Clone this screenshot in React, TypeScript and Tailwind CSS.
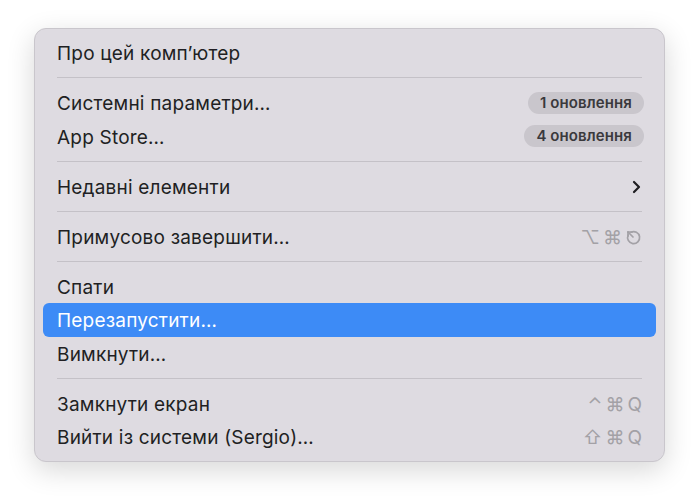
import { ReactNode } from 'react';

const font = { fontFamily: 'Inter, "Noto Sans", sans-serif' };

function Row({ label, right, active }: { label: string; right?: ReactNode; active?: boolean }) {
  return (
    <div
      className={`h-[33.5px] flex items-center justify-between px-[14px] rounded-[6px] ${
        active ? 'bg-[#3d8bf6] text-white' : 'text-[#211f23]'
      }`}
    >
      <span className="text-[19px] leading-none tracking-[0.2px] mt-[2px]">{label}</span>
      {right}
    </div>
  );
}

function Sep() {
  return (
    <div className="h-[16.5px] flex items-center px-[14px]">
      <div className="h-px w-full bg-[#c4c1c7]" />
    </div>
  );
}

function Badge({ text }: { text: string }) {
  return (
    <span className="h-[22px] px-[12px] -mr-[2px] rounded-full bg-[#c9c6cc] text-[15px] font-semibold tracking-[0.1px] text-[#3a393c] flex items-center">
      {text}
    </span>
  );
}

function Keys({ children }: { children: ReactNode }) {
  return <span className="flex items-center gap-[3px] text-[19px] text-[#a3a1a6] leading-none mt-[2px]">{children}</span>;
}

function EscGlyph() {
  return (
    <svg width="17" height="17" viewBox="0 0 17 17" fill="none" stroke="#a3a1a6" strokeWidth="1.7" strokeLinecap="round" strokeLinejoin="round">
      <path d="M6 3.2 A6 6 0 1 1 3.2 6" />
      <path d="M3 3 L8 8" />
      <path d="M3 3 L3 7" />
      <path d="M3 3 L7 3" />
    </svg>
  );
}

function Chevron() {
  return (
    <svg width="10" height="14" viewBox="0 0 10 14" fill="none" stroke="#1f1e21" strokeWidth="2.2" strokeLinecap="round" strokeLinejoin="round" className="mr-[1px] mt-[1px]">
      <path d="M3 2 L8 7 L3 12" />
    </svg>
  );
}

export default function App() {
  return (
    <div className="w-[700px] h-[502px] bg-white pt-[28px] pl-[34px]" style={font}>
      <div className="w-[631px] h-[434px] rounded-[12px] bg-[#dedbe1] border border-[#c9c6cc] shadow-[0_8px_28px_rgba(0,0,0,0.16)] px-[8px] pt-[7px]">
        <Row label="Про цей комп’ютер" />
        <Sep />
        <Row label="Системні параметри…" right={<Badge text="1 оновлення" />} />
        <Row label="App Store…" right={<Badge text="4 оновлення" />} />
        <Sep />
        <Row label="Недавні елементи" right={<Chevron />} />
        <Sep />
        <Row
          label="Примусово завершити…"
          right={
            <Keys>
              <span>⌥</span>
              <span>⌘</span>
              <EscGlyph />
            </Keys>
          }
        />
        <Sep />
        <Row label="Спати" />
        <Row label="Перезапустити…" active />
        <Row label="Вимкнути…" />
        <Sep />
        <Row
          label="Замкнути екран"
          right={
            <Keys>
              <span>⌃</span>
              <span>⌘</span>
              <span>Q</span>
            </Keys>
          }
        />
        <Row
          label="Вийти із системи (Sergio)…"
          right={
            <Keys>
              <span>⇧</span>
              <span>⌘</span>
              <span>Q</span>
            </Keys>
          }
        />
      </div>
    </div>
  );
}
